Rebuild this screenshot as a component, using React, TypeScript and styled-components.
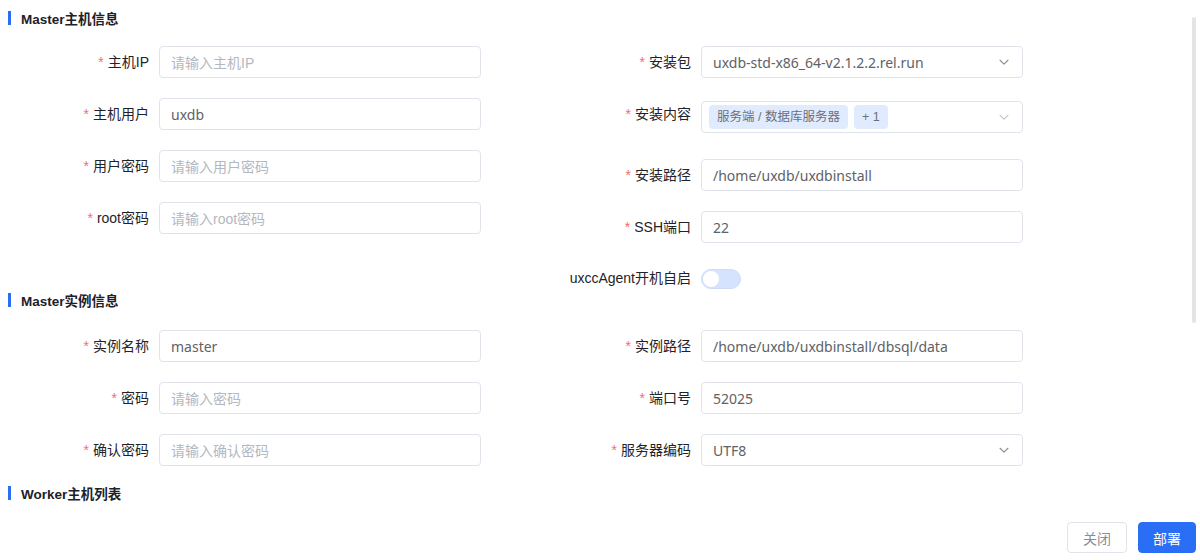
import React, { useState } from 'react';
import styled, { createGlobalStyle } from 'styled-components';

const GlobalStyle = createGlobalStyle`
  html, body {
    margin: 0;
    padding: 0;
    background: #fff;
  }
  body {
    font-family: "Liberation Sans", "Noto Sans CJK SC", sans-serif;
    color: #303133;
  }
  * { box-sizing: border-box; }
`;

const Dialog = styled.div`
  position: relative;
  width: 1200px;
  height: 560px;
  display: flex;
  flex-direction: column;
  overflow: hidden;
`;

const Body = styled.div`
  flex: 1;
  padding: 11px 0 0 8px;
`;

const Thumb = styled.div`
  position: absolute;
  top: 17px;
  right: 4px;
  width: 4px;
  height: 306px;
  border-radius: 2px;
  background: #e4e4e4;
`;

const SectionTitle = styled.div<{ $after?: number }>`
  display: flex;
  align-items: center;
  height: 14px;
  margin-bottom: ${(p) => p.$after ?? 21}px;
  font-size: 13.5px;
  font-weight: bold;
  color: #1d2129;
  &::before {
    content: '';
    width: 3px;
    height: 14px;
    background: #2b6ef6;
    margin-right: 10px;
  }
`;

const Grid = styled.div`
  display: grid;
  grid-template-columns: 474px 541px;
  align-items: start;
`;

const Column = styled.div`
  display: flex;
  flex-direction: column;
`;

const Item = styled.div<{ $height?: number; $gap?: number }>`
  display: flex;
  align-items: flex-start;
  min-height: ${(p) => p.$height ?? 32}px;
  margin-bottom: ${(p) => p.$gap ?? 20}px;
`;

const Label = styled.label<{ $w: number; $lh?: number }>`
  flex: none;
  width: ${(p) => p.$w}px;
  padding-right: 10px;
  text-align: right;
  font-size: 14px;
  line-height: ${(p) => p.$lh ?? 32}px;
  color: #1f2329;
  white-space: nowrap;
`;

const Star = styled.span`
  color: #f56c6c;
  margin-right: 4px;
`;

const Field = styled.div<{ $top?: number }>`
  width: 322px;
  height: 32px;
  margin-top: ${(p) => p.$top ?? 0}px;
  display: flex;
  align-items: center;
  padding: 0 11px;
  border: 1px solid #e1e3ea;
  border-radius: 4px;
  background: #fff;
  font-family: "Noto Sans", "Noto Sans CJK SC", sans-serif;
  font-size: 14px;
  color: #606266;
`;

const Input = styled.input`
  flex: 1;
  min-width: 0;
  border: none;
  outline: none;
  padding: 0;
  font: inherit;
  color: #606266;
  background: transparent;
  &::placeholder {
    color: #b4b7be;
    font-family: "Liberation Sans", "Noto Sans CJK SC", sans-serif;
  }
`;

const Value = styled.span`
  flex: 1;
  color: #606266;
  white-space: nowrap;
`;

const Tags = styled.div`
  flex: 1;
  display: flex;
  gap: 6px;
  margin-left: -4px;
`;

const Tag = styled.span`
  height: 24px;
  line-height: 24px;
  padding: 0 8px;
  border-radius: 4px;
  background: #e1ebff;
  color: #6b7078;
  font-family: "Liberation Sans", "Noto Sans CJK SC", sans-serif;
  font-size: 12.5px;
  white-space: nowrap;
`;

const Chevron = styled.svg<{ $light?: boolean }>`
  flex: none;
  width: 14px;
  height: 14px;
  color: ${(p) => (p.$light ? '#c3c6cc' : '#8a8e96')};
`;

const SwitchTrack = styled.button<{ $on: boolean }>`
  width: 40px;
  height: 20px;
  margin-top: 6px;
  padding: 0;
  border: 1px solid ${(p) => (p.$on ? '#2b6ef6' : '#cfdcf8')};
  border-radius: 10px;
  background: ${(p) => (p.$on ? '#2b6ef6' : '#d6e3ff')};
  display: flex;
  align-items: center;
  justify-content: ${(p) => (p.$on ? 'flex-end' : 'flex-start')};
  cursor: pointer;
`;

const Knob = styled.span`
  width: 16px;
  height: 16px;
  margin: 0 1px;
  border-radius: 50%;
  background: #fff;
`;

const Footer = styled.div`
  display: flex;
  justify-content: flex-end;
  gap: 11px;
  padding: 0 4px 7px 0;
`;

const Button = styled.button<{ $primary?: boolean }>`
  height: 31px;
  padding: 0 ${(p) => (p.$primary ? 14 : 15)}px;
  border-radius: 4px;
  border: 1px solid ${(p) => (p.$primary ? '#2b6ef6' : '#e1e3ea')};
  background: ${(p) => (p.$primary ? '#2b6ef6' : '#fff')};
  color: ${(p) => (p.$primary ? '#fff' : '#8a8e96')};
  font-family: inherit;
  font-size: 14px;
  cursor: pointer;
`;

const ChevronDown = ({ light }: { light?: boolean }) => (
  <Chevron $light={light} viewBox="0 0 16 16" fill="none">
    <path d="M3.5 6l4.5 4.5L12.5 6" stroke="currentColor" strokeWidth="1.3" strokeLinecap="round" strokeLinejoin="round" />
  </Chevron>
);

type Row = { label: string; placeholder?: string; value?: string; select?: boolean };

const TextRow = ({ row, w }: { row: Row; w: number }) => (
  <Item>
    <Label $w={w}><Star>*</Star>{row.label}</Label>
    <Field>
      {row.select ? (
        <>
          <Value>{row.value}</Value>
          <ChevronDown />
        </>
      ) : (
        <Input placeholder={row.placeholder} defaultValue={row.value} />
      )}
    </Field>
  </Item>
);

const hostRows: Row[] = [
  { label: '主机IP', placeholder: '请输入主机IP' },
  { label: '主机用户', value: 'uxdb' },
  { label: '用户密码', placeholder: '请输入用户密码' },
  { label: 'root密码', placeholder: '请输入root密码' },
];

const instLeft: Row[] = [
  { label: '实例名称', value: 'master' },
  { label: '密码', placeholder: '请输入密码' },
  { label: '确认密码', placeholder: '请输入确认密码' },
];

const instRight: Row[] = [
  { label: '实例路径', value: '/home/uxdb/uxdbinstall/dbsql/data' },
  { label: '端口号', value: '52025' },
  { label: '服务器编码', value: 'UTF8', select: true },
];

const App: React.FC = () => {
  const [autoStart, setAutoStart] = useState(false);
  return (
    <Dialog>
      <GlobalStyle />
      <Body>
        <SectionTitle>Master主机信息</SectionTitle>
        <Grid>
          <Column>
            {hostRows.map((r) => <TextRow key={r.label} row={r} w={151} />)}
          </Column>
          <Column>
            <TextRow row={{ label: '安装包', value: 'uxdb-std-x86_64-v2.1.2.2.rel.run', select: true }} w={219} />
            <Item $height={41}>
              <Label $w={219}><Star>*</Star>安装内容</Label>
              <Field $top={3}>
                <Tags>
                  <Tag>服务端 / 数据库服务器</Tag>
                  <Tag>+ 1</Tag>
                </Tags>
                <ChevronDown light />
              </Field>
            </Item>
            <TextRow row={{ label: '安装路径', value: '/home/uxdb/uxdbinstall' }} w={219} />
            <TextRow row={{ label: 'SSH端口', value: '22' }} w={219} />
            <Item $height={30} $gap={0}>
              <Label $w={219} $lh={30}>uxccAgent开机自启</Label>
              <SwitchTrack $on={autoStart} onClick={() => setAutoStart(!autoStart)}>
                <Knob />
              </SwitchTrack>
            </Item>
          </Column>
        </Grid>
        <SectionTitle $after={23}>Master实例信息</SectionTitle>
        <Grid>
          <Column>
            {instLeft.map((r) => <TextRow key={r.label} row={r} w={151} />)}
          </Column>
          <Column>
            {instRight.map((r) => <TextRow key={r.label} row={r} w={219} />)}
          </Column>
        </Grid>
        <SectionTitle>Worker主机列表</SectionTitle>
      </Body>
      <Footer>
        <Button>关闭</Button>
        <Button $primary>部署</Button>
      </Footer>
      <Thumb />
    </Dialog>
  );
};

export default App;
